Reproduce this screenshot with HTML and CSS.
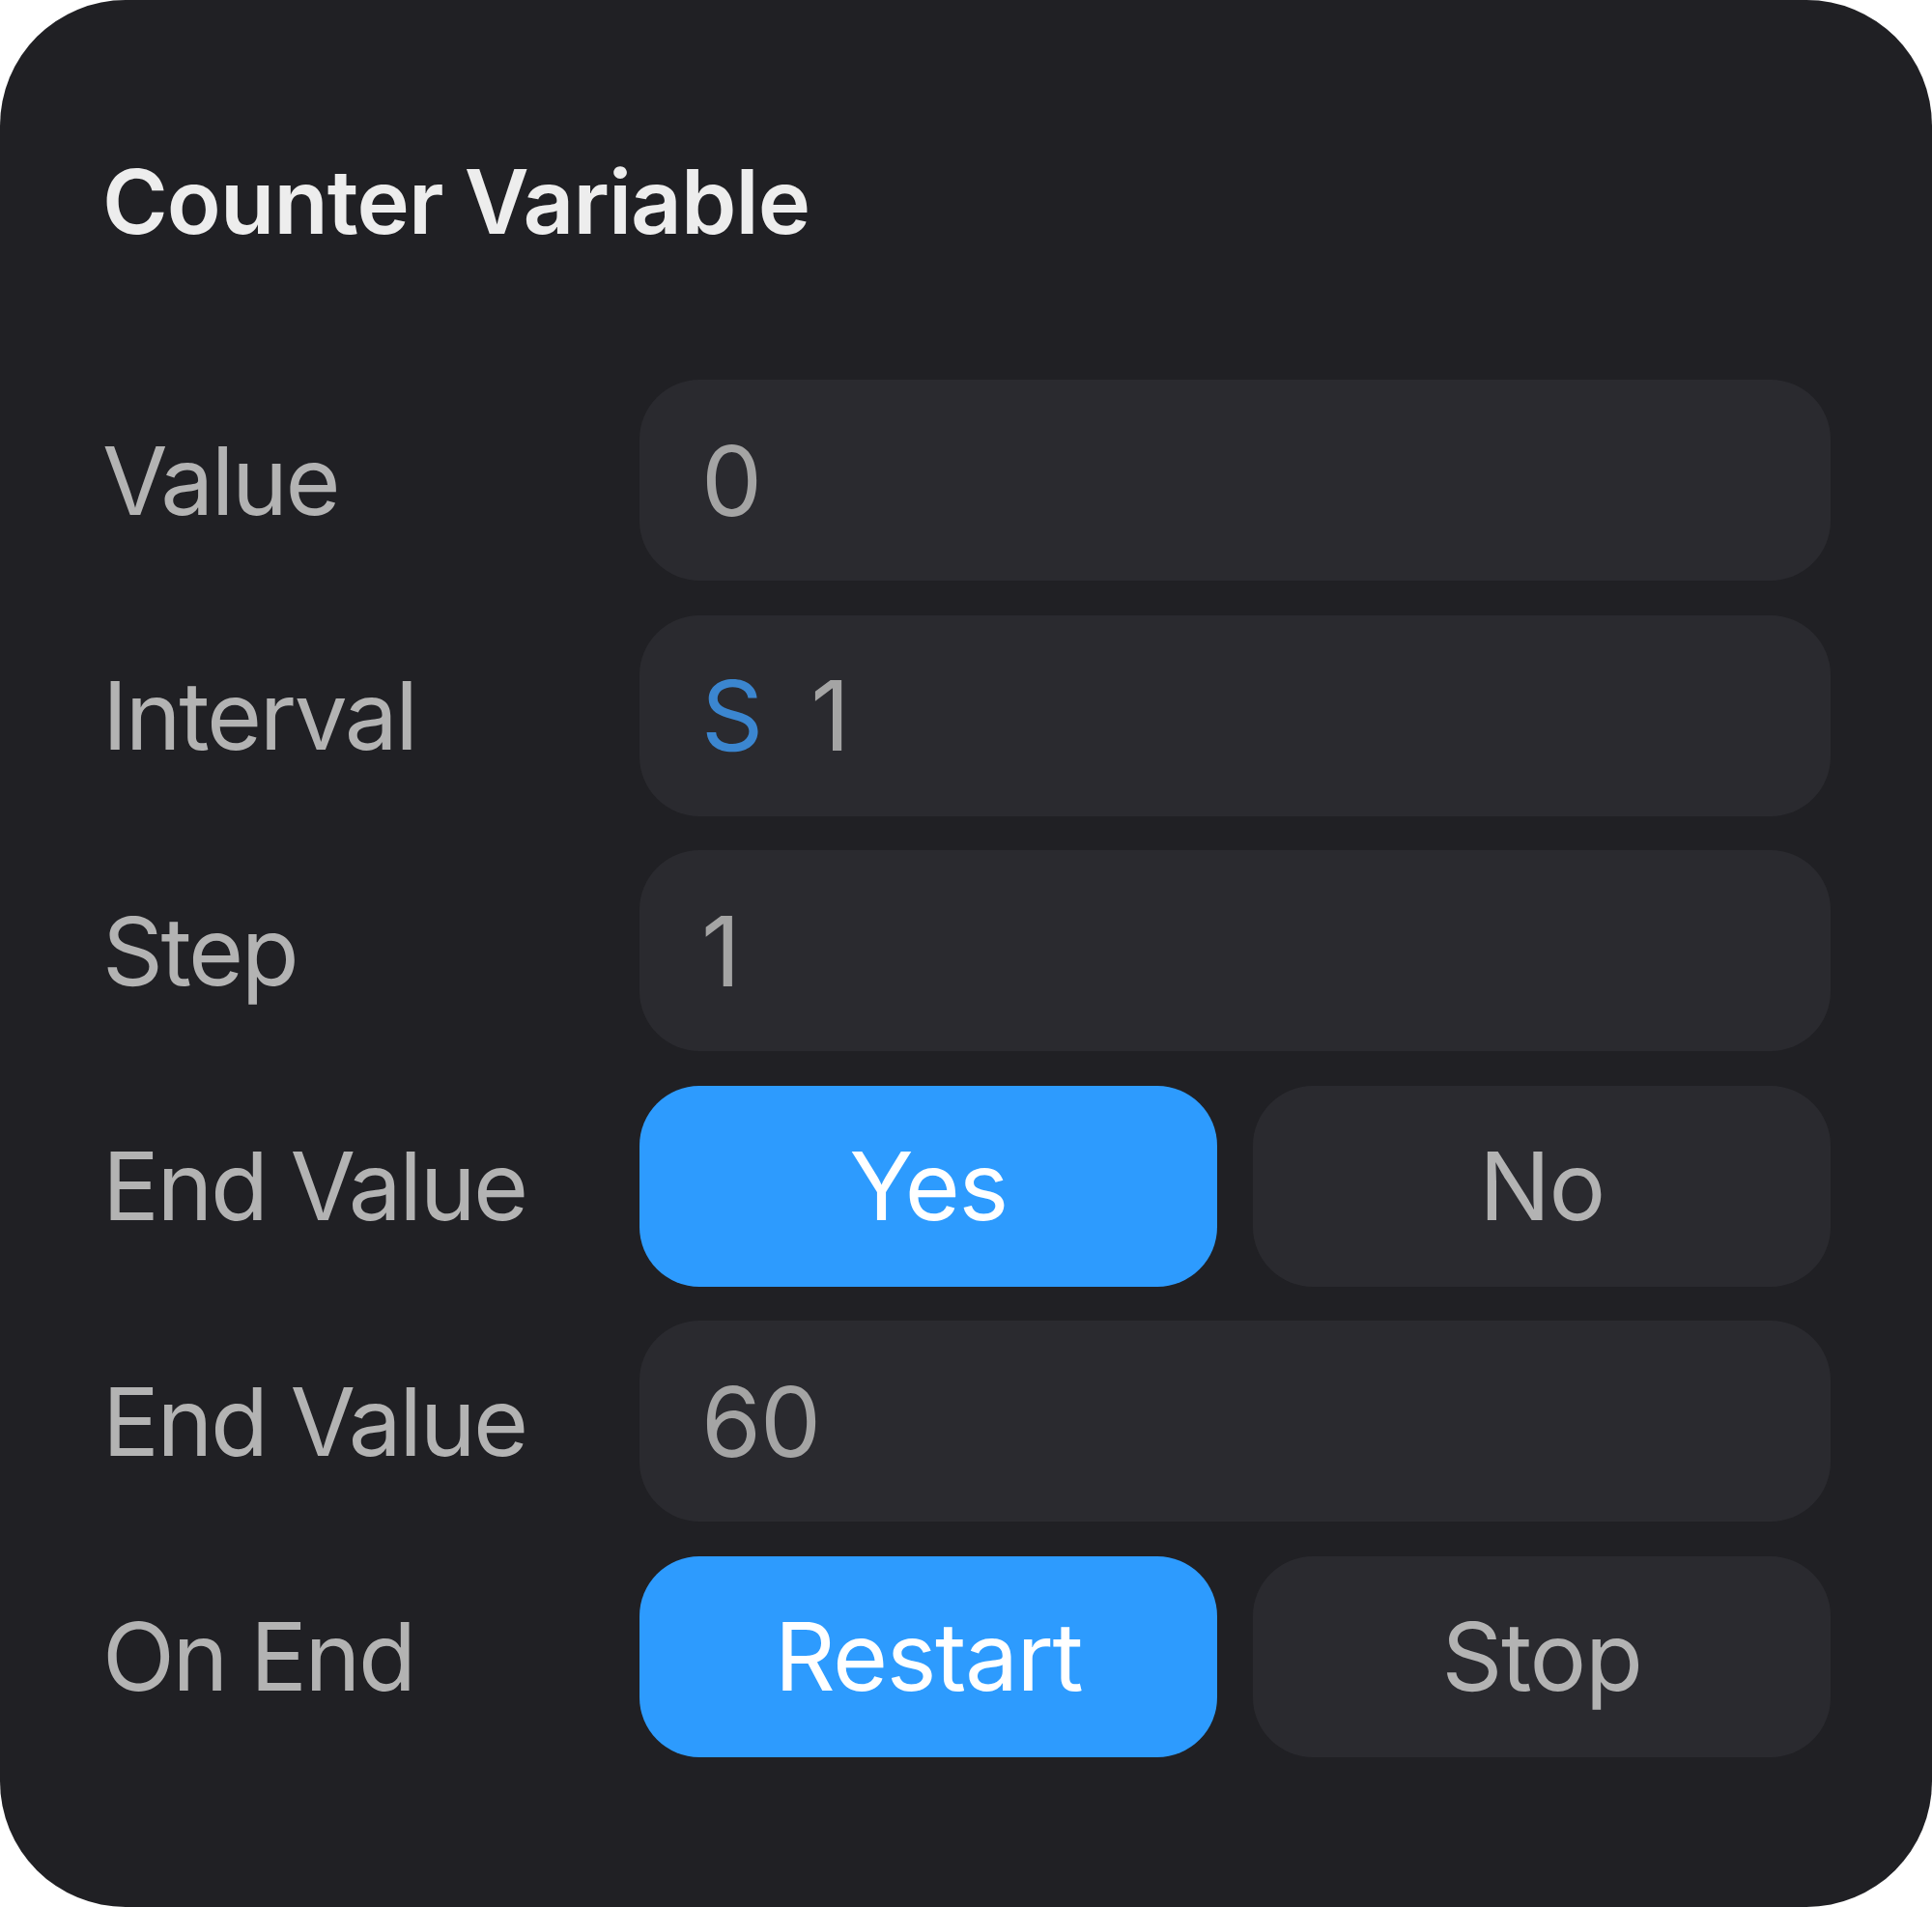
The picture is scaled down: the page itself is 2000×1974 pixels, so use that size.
FILE: index.html
```html
<!DOCTYPE html>
<html lang="en">
<head>
  <meta charset="UTF-8">
  <meta name="viewport" content="width=device-width, initial-scale=1.0">
  <title>Counter Variable</title>
  <link rel="stylesheet" href="styles.css">
</head>
<body>

  <div class="panel">
    <h1 class="panel-title">Counter Variable</h1>

    <div class="rows">
      <div class="row">
        <span class="row-label">Value</span>
        <div class="field">0</div>
      </div>

      <div class="row">
        <span class="row-label">Interval</span>
        <div class="field"><span class="unit">S</span>1</div>
      </div>

      <div class="row">
        <span class="row-label">Step</span>
        <div class="field">1</div>
      </div>

      <div class="row">
        <span class="row-label">End Value</span>
        <div class="choice">
          <button type="button" class="choice-btn active">Yes</button>
          <button type="button" class="choice-btn">No</button>
        </div>
      </div>

      <div class="row">
        <span class="row-label">End Value</span>
        <div class="field">60</div>
      </div>

      <div class="row">
        <span class="row-label">On End</span>
        <div class="choice">
          <button type="button" class="choice-btn active">Restart</button>
          <button type="button" class="choice-btn">Stop</button>
        </div>
      </div>
    </div>
  </div>

</body>
</html>
```

FILE: styles.css
```css
body {
  margin: 0;
  background: #ffffff;
  font-family: Inter, "Noto Sans", sans-serif;
}

.panel {
  width: 2000px;
  height: 1974px;
  box-sizing: border-box;
  background: #202024;
  border-radius: 130px;
  padding: 163px 105px 0 106px;
}

.panel-title {
  margin: 0 0 138px;
  font-size: 92px;
  font-weight: 600;
  line-height: 1;
  color: #ededed;
  letter-spacing: -0.01em;
}

.rows {
  display: flex;
  flex-direction: column;
  gap: 35.6px;
}

.row {
  display: grid;
  grid-template-columns: 556px 1fr;
  align-items: center;
  height: 208px;
}

.row-label {
  font-size: 98px;
  color: #b3b3b3;
  letter-spacing: -0.025em;
}

.field {
  height: 100%;
  box-sizing: border-box;
  display: flex;
  align-items: center;
  padding-left: 64px;
  background: #2a2a2f;
  border-radius: 62px;
  font-size: 100px;
  color: #a4a4a4;
  letter-spacing: -0.01em;
}

.unit {
  color: #3b86d0;
  margin-right: 50px;
}

.choice {
  height: 100%;
  display: grid;
  grid-template-columns: 1fr 1fr;
  gap: 37px;
}

.choice-btn {
  border: none;
  border-radius: 62px;
  background: #2a2a2f;
  color: #b3b3b3;
  font-family: inherit;
  font-size: 98px;
  letter-spacing: -0.015em;
  cursor: pointer;
}

.choice-btn.active {
  background: #2d9bfe;
  color: #ffffff;
}
```
